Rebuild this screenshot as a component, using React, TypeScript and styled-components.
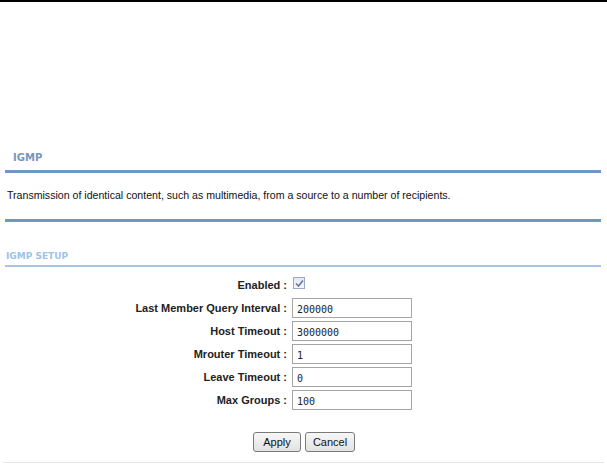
import React from "react";
import styled, { createGlobalStyle } from "styled-components";

const Global = createGlobalStyle`
  html, body { margin: 0; padding: 0; background: #fff; }
  body { font-family: Tahoma, "DejaVu Sans", "Liberation Sans", sans-serif; }
`;

const Page = styled.div`
  width: 607px;
  height: 471px;
  border-top: 2px solid #000;
  box-sizing: border-box;
  display: flex;
  flex-direction: column;
  padding-top: 143px;
`;

const Box = styled.section`
  margin: 0 6px 0 5px;
  display: flex;
  flex-direction: column;
`;

const BoxTitle = styled.h2<{ $light?: boolean }>`
  margin: 0;
  padding: 0 0 0 ${(p) => (p.$light ? "1px" : "8px")};
  height: ${(p) => (p.$light ? "19px" : "25px")};
  font-family: "DejaVu Sans", Verdana, sans-serif;
  font-size: ${(p) => (p.$light ? "9px" : "10px")};
  font-weight: bold;
  color: ${(p) => (p.$light ? "#9cc4e6" : "#7696bf")};
  display: flex;
  align-items: center;
`;

const Bar = styled.div<{ $h: number; $c: string }>`
  height: ${(p) => p.$h}px;
  background: ${(p) => p.$c};
`;

const Desc = styled.p`
  margin: 0;
  height: 46px;
  padding-left: 2px;
  padding-bottom: 3px;
  box-sizing: border-box;
  display: flex;
  align-items: center;
  font-family: "Liberation Sans", Arial, sans-serif;
  font-size: 10.6px;
  color: #111;
`;

const Spacer = styled.div<{ $h: number }>`
  height: ${(p) => p.$h}px;
`;

const Form = styled.div`
  display: grid;
  grid-template-columns: 287px 120px;
  column-gap: 5px;
  row-gap: 3px;
  margin-top: 8px;
  align-items: center;
`;

const Label = styled.label`
  text-align: right;
  font-family: "Liberation Sans", Arial, sans-serif;
  font-weight: bold;
  font-size: 11px;
  color: #222;
  white-space: nowrap;
`;

const Input = styled.input`
  box-sizing: border-box;
  width: 120px;
  height: 20px;
  border: 1px solid #a5a5a5;
  padding: 2px 4px 0;
  font-family: "DejaVu Sans Mono", monospace;
  font-size: 10px;
  color: #222;
  background: #fff;
`;

const CheckCell = styled.div`
  height: 20px;
  display: flex;
  align-items: center;
`;

const Check = styled.span`
  box-sizing: border-box;
  width: 12px;
  height: 12px;
  border: 1px solid #9aa8c2;
  background: linear-gradient(#e3e8f3, #f5f7fb);
  display: flex;
  align-items: center;
  justify-content: center;
  margin-left: 1px;
  margin-top: -4px;
`;

const Buttons = styled.div`
  display: flex;
  justify-content: center;
  gap: 4px;
  margin-top: 22px;
  padding-left: 1px;
`;

const Button = styled.button<{ $w: number }>`
  width: ${(p) => p.$w}px;
  height: 20px;
  box-sizing: border-box;
  border: 1px solid #7a7a7a;
  border-radius: 3px;
  background: linear-gradient(#f7f7f7, #e2e2e2);
  font-family: "Liberation Sans", Arial, sans-serif;
  font-size: 11px;
  color: #111;
  padding: 0;
`;

const Footer = styled.div`
  margin: 10px 3px 0 3px;
  height: 1px;
  background: #e6e6e6;
`;

const fields: [string, string][] = [
  ["Last Member Query Interval :", "200000"],
  ["Host Timeout :", "3000000"],
  ["Mrouter Timeout :", "1"],
  ["Leave Timeout :", "0"],
  ["Max Groups :", "100"],
];

export default function App() {
  return (
    <Page>
      <Global />
      <Box>
        <BoxTitle>IGMP</BoxTitle>
        <Bar $h={3} $c="#6e97c3" />
        <Desc>
          Transmission of identical content, such as multimedia, from a source to a number of recipients.
        </Desc>
        <Bar $h={3} $c="#6e97c3" />
      </Box>
      <Spacer $h={24} />
      <Box>
        <BoxTitle $light>IGMP SETUP</BoxTitle>
        <Bar $h={2} $c="#a9c6de" />
      </Box>
      <Form>
        <Label>Enabled :</Label>
        <CheckCell>
          <Check>
            <svg width="9" height="9" viewBox="0 0 9 9">
              <path d="M1 4.5 L3.5 7 L8 1.5" stroke="#6a74b0" strokeWidth="1.6" fill="none" />
            </svg>
          </Check>
        </CheckCell>
        {fields.map(([l, v]) => (
          <React.Fragment key={l}>
            <Label>{l}</Label>
            <Input defaultValue={v} />
          </React.Fragment>
        ))}
      </Form>
      <Buttons>
        <Button $w={48}>Apply</Button>
        <Button $w={50}>Cancel</Button>
      </Buttons>
      <Footer />
    </Page>
  );
}
